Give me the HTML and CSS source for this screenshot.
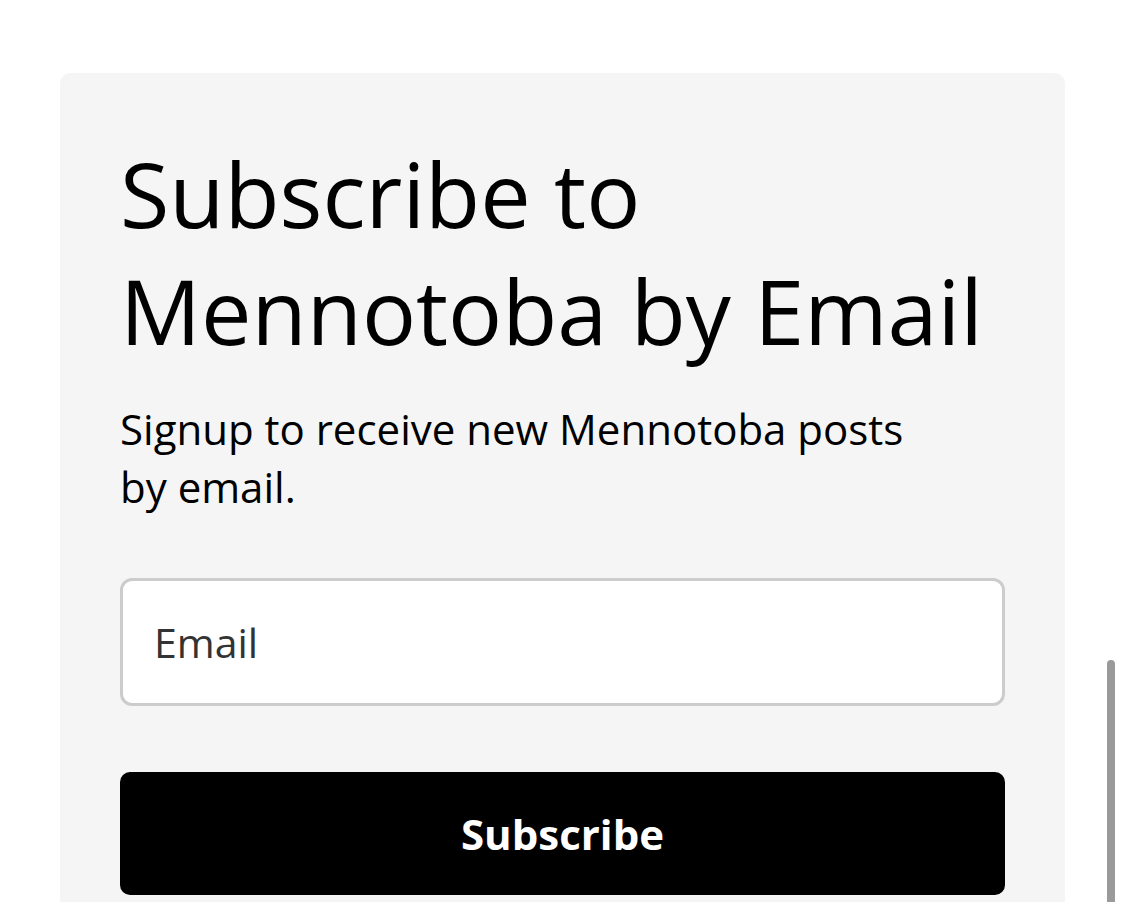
FILE: index.html
```html
<!DOCTYPE html>
<html lang="en">
<head>
    <meta charset="UTF-8">
    <meta name="viewport" content="width=device-width, initial-scale=1.0">
    <title>Subscribe to Mennotoba</title>
    <link rel="stylesheet" href="styles.css">
</head>
<body>

<div class="page">
    <div class="subscribe-box">
        <h2>Subscribe to Mennotoba by Email</h2>
        <p class="intro">Signup to receive new Mennotoba posts by email.</p>
        <form class="subscribe-form" onsubmit="return false;">
            <input type="email" class="email-input" placeholder="Email">
            <button type="submit" class="subscribe-button">Subscribe</button>
        </form>
    </div>
</div>

<div class="scroll-thumb"></div>

</body>
</html>
```

FILE: styles.css
```css
body {
    margin: 0;
    background-color: #fff;
    font-family: 'Open Sans', 'Noto Sans', sans-serif;
    color: #000;
    overflow: hidden;
}

.page {
    padding: 73px 60px 0;
}

.subscribe-box {
    background-color: #f5f5f5;
    border-radius: 10px 10px 0 0;
    padding: 62px 60px 40px;
}

.subscribe-box h2 {
    margin: 0;
    font-size: 90px;
    font-weight: 400;
    line-height: 117px;
    max-width: 880px;
}

.intro {
    margin: 31px 0 0;
    font-size: 42px;
    line-height: 58px;
    max-width: 820px;
}

.subscribe-form {
    display: flex;
    flex-direction: column;
    gap: 66px;
    margin-top: 62px;
}

.email-input {
    box-sizing: border-box;
    height: 128px;
    width: 100%;
    padding: 0 31px;
    border: 3px solid #cccccc;
    border-radius: 12px;
    background-color: #fff;
    font-family: inherit;
    font-size: 41px;
    color: #333;
}

.email-input::placeholder {
    color: #333;
}

.subscribe-button {
    height: 123px;
    width: 100%;
    border: none;
    border-radius: 10px;
    background-color: #000;
    color: #fff;
    font-family: inherit;
    font-size: 42px;
    font-weight: 700;
    cursor: pointer;
}

/* thin overlay scrollbar on the right edge */
.scroll-thumb {
    position: fixed;
    right: 10px;
    top: 660px;
    width: 8px;
    height: 260px;
    border-radius: 4px;
    background-color: #9a9a9a;
}
```
